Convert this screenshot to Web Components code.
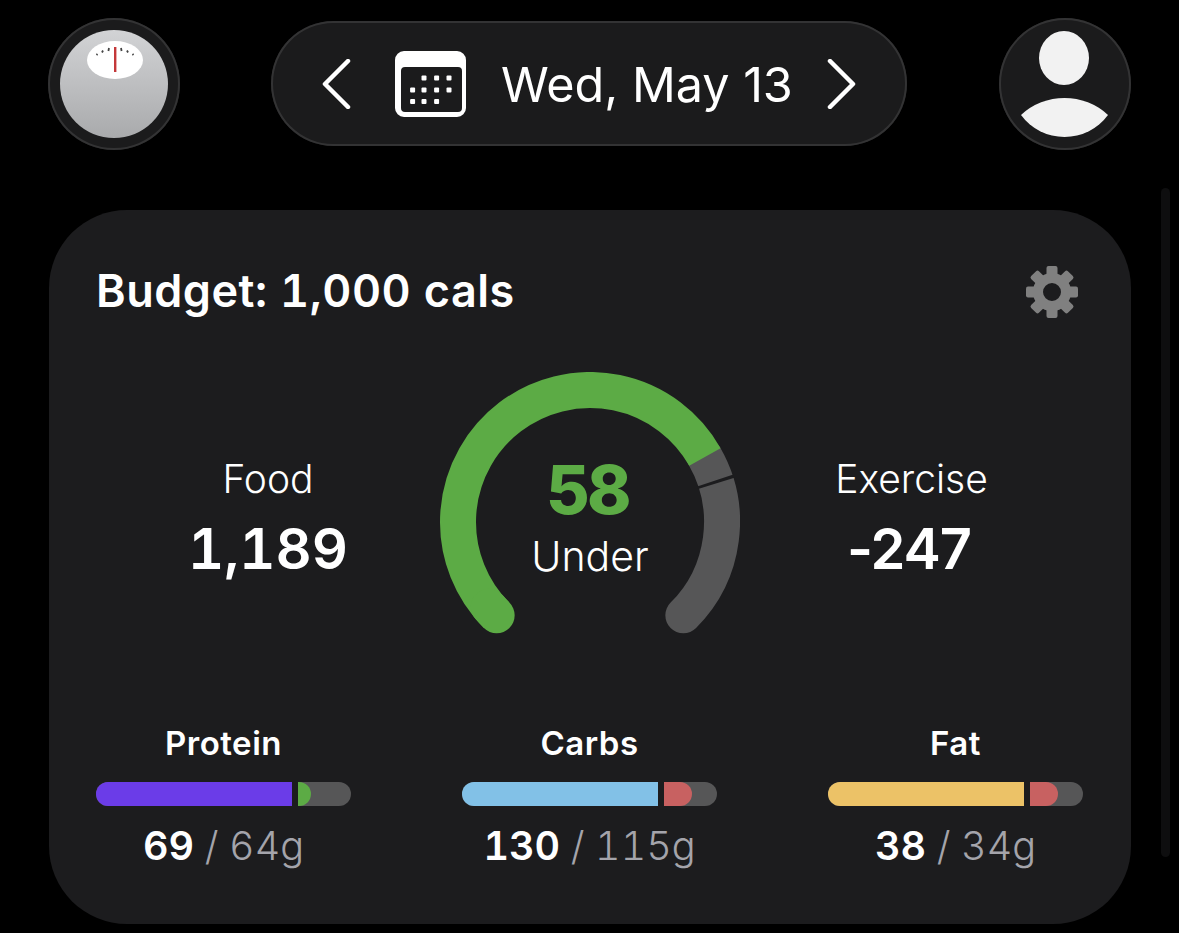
<!DOCTYPE html>
<html>
<head>
<meta charset="utf-8">
<title>Calorie budget</title>
<style>
  html, body { margin: 0; height: 100%; background: #000; overflow: hidden; }
  body { font-family: Inter, "Noto Sans", sans-serif; color: #fff; }
</style>
</head>
<body>
<day-screen>
  <round-button slot="left">
    <svg width="108" height="108" viewBox="0 0 108 108">
      <defs>
        <linearGradient id="dome" x1="0" y1="0" x2="0" y2="1">
          <stop offset="0" stop-color="#d2d3d5"/>
          <stop offset="1" stop-color="#a9aaac"/>
        </linearGradient>
      </defs>
      <circle cx="54" cy="54" r="54" fill="url(#dome)"/>
      <ellipse cx="55" cy="30" rx="28" ry="19" fill="#fff"/>
      <g stroke="#444" stroke-width="1.800">
        <path d="M37.500 24l-1 1M43 20.500l-1 2M49 18l-.6 3M61 18l.6 3M67 20.500l1 2M72.500 24l1 1"/>
      </g>
      <rect x="54" y="17" width="2.400" height="25" fill="#c4383a"/>
    </svg>
  </round-button>
  <date-pill slot="center">Wed, May 13</date-pill>
  <round-button slot="right">
    <svg width="132" height="132" viewBox="0 0 132 132">
      <ellipse cx="65" cy="40" rx="25" ry="27" fill="#f2f2f2"/>
      <path d="M22 97A64 64 0 0 1 109 97A54 54 0 0 1 22 97Z" fill="#f2f2f2"/>
    </svg>
  </round-button>
  <budget-card title="Budget: 1,000 cals">
    <stat-block slot="food" label="Food" value="1,189" tabular></stat-block>
    <calorie-gauge slot="gauge" value="58" label="Under"></calorie-gauge>
    <stat-block slot="exercise" label="Exercise" value="-247"></stat-block>
    <macro-bar slot="macros" label="Protein" value="69" goal="64g" fill="#6b3ce8" over="#5cab45" size="13"></macro-bar>
    <macro-bar slot="macros" label="Carbs" value="130" goal="115g" fill="#82c1e7" over="#c86161" size="28"></macro-bar>
    <macro-bar slot="macros" label="Fat" value="38" goal="34g" fill="#ecc267" over="#c86161" size="28"></macro-bar>
  </budget-card>
</day-screen>

<script>
  class DayScreen extends HTMLElement {
    constructor() {
      super();
      const shadowRoot = this.attachShadow({ mode: 'open' });
      shadowRoot.innerHTML = `
  <style>
  :host { display: block; position: relative; height: 933px; }
  .top {
    display: flex;
    justify-content: space-between;
    align-items: center;
    padding: 18px 48px 0;
  }
  .body { padding: 60px 48px 0 49px; }
  .scroll {
    position: absolute;
    top: 188px;
    left: 1161px;
    width: 9px;
    height: 669px;
    border-radius: 5px;
    background: #0e0e0f;
  }
  </style>
  <div class="top">
    <slot name="left"></slot>
    <slot name="center"></slot>
    <slot name="right"></slot>
  </div>
  <div class="body"><slot></slot></div>
  <div class="scroll"></div>
  `;
    }
  }

  class RoundButton extends HTMLElement {
    constructor() {
      super();
      const shadowRoot = this.attachShadow({ mode: 'open' });
      shadowRoot.innerHTML = `
  <style>
  :host {
    display: flex;
    align-items: center;
    justify-content: center;
    box-sizing: border-box;
    width: 132px;
    height: 132px;
    border-radius: 50%;
    background: #1b1b1c;
    box-shadow: inset 0 0 0 2px #333334;
  }
  ::slotted(svg) { display: block; }
  </style>
  <slot></slot>
  `;
    }
  }

  class DatePill extends HTMLElement {
    constructor() {
      super();
      const shadowRoot = this.attachShadow({ mode: 'open' });
      let dots = '';
      const rows = [
        [78, [424, 436.6, 449]],
        [90, [412.6, 424, 436.6, 449]],
        [101.5, [412.6, 424, 436.6]],
      ];
      rows.forEach(([y, xs]) => {
        xs.forEach((x) => {
          dots += `<rect x="${x - 395 - 2.5}" y="${y - 51 - 2.5}" width="5" height="5" rx="1" fill="#fff"/>`;
        });
      });
      shadowRoot.innerHTML = `
  <style>
  :host {
    display: flex;
    align-items: center;
    box-sizing: border-box;
    width: 636px;
    height: 125px;
    margin: -1px 1px 0 0;
    padding-left: 50px;
    border-radius: 63px;
    background: #1b1b1c;
    box-shadow: inset 0 0 0 2px #333334;
    font-size: 48.500px;
    white-space: nowrap;
  }
  svg { display: block; flex: none; }
  .cal { margin: 0 35px 0 44px; }
  .txt { width: 290px; padding-top: 2px; text-align: center; margin-right: 36px; }
  </style>
  <svg width="30" height="50" viewBox="0 0 30 50"><path d="M27 3L4 26L27 49" transform="translate(0 -1)" fill="none" stroke="#fff" stroke-width="4.500" stroke-linecap="round" stroke-linejoin="round"/></svg>
  <svg class="cal" width="71" height="66" viewBox="0 0 71 66">
    <path fill-rule="evenodd" d="M9 0H62A9 9 0 0 1 71 9V57A9 9 0 0 1 62 66H9A9 9 0 0 1 0 57V9A9 9 0 0 1 9 0ZM10 16A4 4 0 0 0 6 20V57A4 4 0 0 0 10 61H63A4 4 0 0 0 67 57V20A4 4 0 0 0 63 16Z" fill="#fff"/>
    ${dots}
  </svg>
  <span class="txt"><slot></slot></span>
  <svg width="30" height="50" viewBox="0 0 30 50"><path d="M3 3L26 26L3 49" transform="translate(0 -1)" fill="none" stroke="#fff" stroke-width="4.500" stroke-linecap="round" stroke-linejoin="round"/></svg>
  `;
    }
  }

  class BudgetCard extends HTMLElement {
    constructor() {
      super();
      const shadowRoot = this.attachShadow({ mode: 'open' });
      let teeth = '';
      for (let i = 0; i < 8; i++) {
        teeth += `<rect x="-5.500" y="-26" width="11" height="12" rx="2" transform="rotate(${i * 45})"/>`;
      }
      shadowRoot.innerHTML = `
  <style>
  :host {
    display: block;
    box-sizing: border-box;
    width: 1082px;
    height: 714px;
    padding: 48px 48px 0 47px;
    border-radius: 78px;
    background: #1c1c1e;
  }
  .head {
    display: flex;
    justify-content: space-between;
    align-items: center;
    height: 66px;
  }
  h2 { margin: 0 0 2px; font-size: 45px; font-weight: 600; letter-spacing: .5px; font-variant-numeric: tabular-nums; }
  .gear { display: block; margin: 2px 4px 0 0; fill: #808080; }
  .stats {
    display: grid;
    grid-template-columns: 344px 300px 1fr;
    align-items: center;
    margin-top: 48px;
  }
  .macros {
    display: grid;
    grid-template-columns: repeat(3, 255px);
    justify-content: space-between;
    margin-top: 87px;
  }
  </style>
  <div class="head">
    <h2>${this.getAttribute('title')}</h2>
    <svg class="gear" width="54" height="54" viewBox="-27 -27 54 54">
      ${teeth}
      <circle r="14" fill="none" stroke="#808080" stroke-width="10"/>
    </svg>
  </div>
  <div class="stats">
    <slot name="food"></slot>
    <slot name="gauge"></slot>
    <slot name="exercise"></slot>
  </div>
  <div class="macros"><slot name="macros"></slot></div>
  `;
    }
  }

  class StatBlock extends HTMLElement {
    constructor() {
      super();
      const shadowRoot = this.attachShadow({ mode: 'open' });
      const tabular = this.hasAttribute('tabular');
      shadowRoot.innerHTML = `
  <style>
  :host { display: block; text-align: center; padding-top: 33px; }
  .label { font-size: 39px; font-weight: 300; line-height: 50px; }
  .value {
    margin-top: 9px;
    font-size: 56px;
    line-height: 72px;
    font-weight: 600;
    ${tabular ? 'font-variant-numeric: tabular-nums;' : 'letter-spacing: -1px; padding-right: 5px;'}
  }
  </style>
  <div class="label">${this.getAttribute('label')}</div>
  <div class="value">${this.getAttribute('value')}</div>
  `;
    }
  }

  class CalorieGauge extends HTMLElement {
    constructor() {
      super();
      const shadowRoot = this.attachShadow({ mode: 'open' });
      // angles are clockwise from straight up
      const point = (deg) => {
        const a = (deg * Math.PI) / 180;
        return `${(150 + 132 * Math.sin(a)).toFixed(2)} ${(150 - 132 * Math.cos(a)).toFixed(2)}`;
      };
      const arc = (from, to) => `M${point(from)}A132 132 0 ${to - from > 180 ? 1 : 0} 1 ${point(to)}`;
      shadowRoot.innerHTML = `
  <style>
  :host { display: grid; width: 300px; height: 262px; }
  svg, .mid { grid-area: 1 / 1; }
  svg { display: block; }
  .mid { text-align: center; padding-top: 81px; }
  .num { padding-right: 5px; font-size: 67px; line-height: 74px; font-weight: 800; letter-spacing: -2.500px; color: #5cab45; }
  .txt { margin-top: 3px; font-size: 41px; font-weight: 300; line-height: 52px; }
  </style>
  <svg width="300" height="262" viewBox="0 0 300 262" fill="none" stroke-width="36">
    <path d="${arc(60, 135)}" stroke="#565657" stroke-linecap="round"/>
    <path d="${arc(-135, 60.5)}" stroke="#5cab45"/>
    <path d="${arc(-135, -130)}" stroke="#5cab45" stroke-linecap="round"/>
    <path d="${arc(71.700, 73)}" stroke="#1c1c1e" style="stroke-width:38"/>
  </svg>
  <div class="mid">
    <div class="num">${this.getAttribute('value')}</div>
    <div class="txt">${this.getAttribute('label')}</div>
  </div>
  `;
    }
  }

  class MacroBar extends HTMLElement {
    constructor() {
      super();
      const shadowRoot = this.attachShadow({ mode: 'open' });
      shadowRoot.innerHTML = `
  <style>
  :host { display: block; text-align: center; }
  .label { font-size: 33px; line-height: 44px; font-weight: 600; letter-spacing: .5px; }
  .track {
    display: flex;
    height: 24px;
    margin-top: 17px;
    border-radius: 12px;
    background: #565657;
    overflow: hidden;
  }
  .fill { width: 196px; background: ${this.getAttribute('fill')}; }
  .gap { width: 6px; background: #1c1c1e; }
  .over {
    width: ${this.getAttribute('size')}px;
    border-radius: 0 12px 12px 0;
    background: ${this.getAttribute('over')};
  }
  .nums { margin-top: 13px; font-size: 39.500px; font-weight: 300; line-height: 54px; color: #a4a4ab; font-variant-numeric: tabular-nums; }
  b { color: #fff; font-weight: 600; }
  </style>
  <div class="label">${this.getAttribute('label')}</div>
  <div class="track">
    <div class="fill"></div>
    <div class="gap"></div>
    <div class="over"></div>
  </div>
  <div class="nums"><b>${this.getAttribute('value')}</b> / ${this.getAttribute('goal')}</div>
  `;
    }
  }

  window.customElements.define('day-screen', DayScreen);
  window.customElements.define('round-button', RoundButton);
  window.customElements.define('date-pill', DatePill);
  window.customElements.define('budget-card', BudgetCard);
  window.customElements.define('stat-block', StatBlock);
  window.customElements.define('calorie-gauge', CalorieGauge);
  window.customElements.define('macro-bar', MacroBar);
</script>
</body>
</html>
